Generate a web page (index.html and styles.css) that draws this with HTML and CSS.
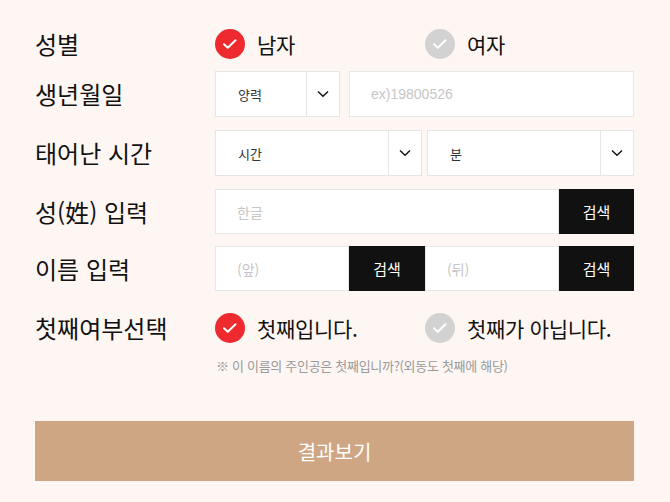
FILE: index.html
```html
<!DOCTYPE html>
<html lang="ko">
<head>
<meta charset="utf-8">
<title>이름 풀이</title>
<link rel="stylesheet" href="styles.css">
</head>
<body>
<main class="form">
  <div class="row row-choice">
    <div class="label">성별</div>
    <div class="choices">
      <label class="choice is-on">
        <span class="mark"><svg viewBox="0 0 30 30" width="30" height="30"><path d="M9 15.2 L12.8 18.8 L20.5 11.3"/></svg></span>
        <span class="choice-text">남자</span>
      </label>
      <label class="choice">
        <span class="mark"><svg viewBox="0 0 30 30" width="30" height="30"><path d="M9 15.2 L12.8 18.8 L20.5 11.3"/></svg></span>
        <span class="choice-text">여자</span>
      </label>
    </div>
  </div>

  <div class="row row-box">
    <div class="label">생년월일</div>
    <div class="birth">
      <div class="select">
        <span class="select-value">양력</span>
        <span class="select-arrow"><svg viewBox="0 0 12 8" width="12" height="8"><path d="M1 1.5 L6 6.3 L11 1.5"/></svg></span>
      </div>
      <input class="text-input" type="text" placeholder="ex)19800526">
    </div>
  </div>

  <div class="row row-box">
    <div class="label">태어난 시간</div>
    <div class="time">
      <div class="select">
        <span class="select-value">시간</span>
        <span class="select-arrow"><svg viewBox="0 0 12 8" width="12" height="8"><path d="M1 1.5 L6 6.3 L11 1.5"/></svg></span>
      </div>
      <div class="select">
        <span class="select-value">분</span>
        <span class="select-arrow"><svg viewBox="0 0 12 8" width="12" height="8"><path d="M1 1.5 L6 6.3 L11 1.5"/></svg></span>
      </div>
    </div>
  </div>

  <div class="row row-field">
    <div class="label">성(姓) 입력</div>
    <div class="surname">
      <input class="text-input" type="text" placeholder="한글">
      <button class="search" type="button">검색</button>
    </div>
  </div>

  <div class="row row-field row-name">
    <div class="label">이름 입력</div>
    <div class="given">
      <input class="text-input" type="text" placeholder="(앞)">
      <button class="search" type="button">검색</button>
      <input class="text-input" type="text" placeholder="(뒤)">
      <button class="search" type="button">검색</button>
    </div>
  </div>

  <div class="row row-choice row-first">
    <div class="label">첫째여부선택</div>
    <div class="choices">
      <label class="choice is-on">
        <span class="mark"><svg viewBox="0 0 30 30" width="30" height="30"><path d="M9 15.2 L12.8 18.8 L20.5 11.3"/></svg></span>
        <span class="choice-text">첫째입니다.</span>
      </label>
      <label class="choice">
        <span class="mark"><svg viewBox="0 0 30 30" width="30" height="30"><path d="M9 15.2 L12.8 18.8 L20.5 11.3"/></svg></span>
        <span class="choice-text">첫째가 아닙니다.</span>
      </label>
    </div>
  </div>

  <p class="note">※ 이 이름의 주인공은 첫째입니까?(외동도 첫째에 해당)</p>

  <button class="submit" type="button">결과보기</button>
</main>
</body>
</html>
```

FILE: styles.css
```css
* {
  box-sizing: border-box;
}

body {
  margin: 0;
  background: #fdf6f3;
  color: #111;
  font-family: "Noto Sans CJK KR", "Noto Sans", sans-serif;
}

.form {
  width: 670px;
  padding: 21px 36px 0 35px;
}

/* one form line: label column + field column */
.row {
  display: grid;
  grid-template-columns: 180px 419px;
  align-items: center;
}

.label {
  font-size: 24px;
  line-height: 32px;
  color: #111;
  white-space: nowrap;
}

.row-choice {
  height: 46px;
  margin-bottom: 4px;
}

.row-box {
  height: 46px;
  margin-bottom: 13px;
}

.row-field {
  height: 45px;
  margin-bottom: 12px;
}

.row-name {
  margin-bottom: 14px;
}

.row-first {
  margin-bottom: 6px;
}

/* radio-like choices */
.choices {
  display: grid;
  grid-template-columns: 210px 209px;
  align-items: center;
}

.choice {
  display: flex;
  align-items: center;
  gap: 12px;
}

.mark {
  width: 30px;
  height: 30px;
  border-radius: 50%;
  background: #d2d2d2;
  display: flex;
  align-items: center;
  justify-content: center;
}

.mark svg {
  display: block;
}

.mark path {
  fill: none;
  stroke: #fff;
  stroke-width: 2;
  stroke-linecap: round;
  stroke-linejoin: round;
}

.choice.is-on .mark {
  background: #ee2a2e;
}

.choice-text {
  font-size: 21px;
  line-height: 28px;
  letter-spacing: -0.3px;
  color: #111;
  white-space: nowrap;
}

/* field groups */
.birth {
  display: grid;
  grid-template-columns: 125px 1fr;
  gap: 9px;
  height: 100%;
}

.time {
  display: grid;
  grid-template-columns: 1fr 1fr;
  gap: 5px;
  height: 100%;
}

.surname {
  display: grid;
  grid-template-columns: 1fr 75px;
  height: 100%;
}

.given {
  display: grid;
  grid-template-columns: 134px 76px 134px 75px;
  height: 100%;
}

.select {
  display: flex;
  background: #fff;
  border: 1px solid #e6e6e6;
  height: 100%;
}

.select-value {
  flex: 1;
  display: flex;
  align-items: center;
  padding-left: 22px;
  font-size: 13px;
  color: #333;
}

.select-arrow {
  width: 33px;
  border-left: 1px solid #e6e6e6;
  display: flex;
  align-items: center;
  justify-content: center;
}

.select-arrow path {
  fill: none;
  stroke: #111;
  stroke-width: 1.4;
}

.text-input {
  width: 100%;
  height: 100%;
  margin: 0;
  background: #fff;
  border: 1px solid #e8e8e8;
  padding: 0 0 0 21px;
  font-family: "Liberation Sans", "Noto Sans CJK KR", sans-serif;
  font-size: 14px;
  color: #333;
  outline: none;
}

.given .text-input,
.surname .text-input {
  font-family: "Noto Sans CJK KR", sans-serif;
}

.text-input::placeholder {
  color: #c6c6c6;
}

.search {
  height: 100%;
  margin: 0;
  border: 0;
  background: #111;
  color: #fff;
  font-family: "Noto Sans CJK KR", sans-serif;
  font-size: 15px;
  padding: 0;
}

.note {
  margin: 0 0 46px 181px;
  font-size: 13px;
  line-height: 18px;
  letter-spacing: -0.3px;
  color: #9a9a9a;
}

.submit {
  display: block;
  width: 599px;
  height: 60px;
  border: 0;
  margin: 0;
  background: #cfa684;
  color: #fff;
  font-family: "Noto Sans CJK KR", sans-serif;
  font-size: 20px;
}
```
